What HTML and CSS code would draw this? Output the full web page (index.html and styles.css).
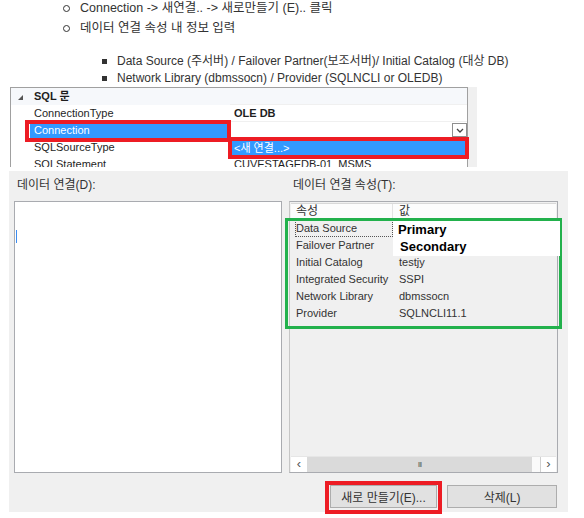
FILE: index.html
```html
<!DOCTYPE html>
<html>
<head lang="ko">
    <meta charset="UTF-8">
    <title>데이터 연결</title>
    <link rel="stylesheet" href="styles.css">
</head>
<body>
<div class="page">
    <ul class="steps">
        <li>Connection -&gt; 새연결.. -&gt; 새로만들기 (E).. 클릭</li>
        <li>데이터 연결 속성 내 정보 입력</li>
    </ul>
    <ul class="sub">
        <li>Data Source (주서버) / Failover Partner(보조서버)/ Initial Catalog (대상 DB)</li>
        <li>Network Library (dbmssocn) / Provider (SQLNCLI or OLEDB)</li>
    </ul>

    <div class="props">
        <div class="props-grid">
            <div class="prow cat">
                <span class="gut"><svg width="5" height="5" viewBox="0 0 5 5"><path d="M5 0V5H0Z" fill="#555"/></svg></span>
                <span class="pname"><b>SQL 문</b></span>
                <span class="pval"></span>
            </div>
            <div class="prow">
                <span class="gut"></span>
                <span class="pname">ConnectionType</span>
                <span class="pval"><b>OLE DB</b></span>
            </div>
            <div class="prow sel">
                <span class="gut"></span>
                <span class="pname">Connection</span>
                <span class="pval"><span class="dd-btn"><svg width="8" height="5" viewBox="0 0 8 5"><path d="M1 1L4 4L7 1" fill="none" stroke="#444" stroke-width="1.3"/></svg></span></span>
            </div>
            <div class="prow">
                <span class="gut"></span>
                <span class="pname">SQLSourceType</span>
                <span class="pval"></span>
            </div>
            <div class="prow">
                <span class="gut"></span>
                <span class="pname">SQLStatement</span>
                <span class="pval">CUVESTAGEDB-01_MSMS</span>
            </div>
        </div>
        <div class="props-side"></div>
        <div class="mark mark-conn"></div>
        <div class="dropdown">&lt;새 연결...&gt;</div>
    </div>

    <div class="dialog">
        <div class="cols">
            <div class="col">
                <div class="label left-label">데이터 연결(D):</div>
                <div class="listbox"><span class="caret"></span></div>
            </div>
            <div class="col">
                <div class="label right-label">데이터 연결 속성(T):</div>
                <div class="attrbox">
                    <div class="ahead"><span class="aname">속성</span><span class="aval">값</span></div>
                    <div class="arow focus"><span class="aname">Data Source</span><span class="aval"></span></div>
                    <div class="arow"><span class="aname">Failover Partner</span><span class="aval"></span></div>
                    <div class="arow"><span class="aname">Initial Catalog</span><span class="aval">testjy</span></div>
                    <div class="arow"><span class="aname">Integrated Security</span><span class="aval">SSPI</span></div>
                    <div class="arow"><span class="aname">Network Library</span><span class="aval">dbmssocn</span></div>
                    <div class="arow"><span class="aname">Provider</span><span class="aval">SQLNCLI11.1</span></div>
                    <div class="hscroll">
                        <span class="sb-btn">&lsaquo;</span>
                        <span class="sb-thumb">III</span>
                        <span class="sb-rest"></span>
                        <span class="sb-btn">&rsaquo;</span>
                    </div>
                    <div class="mark-green"></div>
                    <div class="values-note">
                        <div>Primary</div>
                        <div class="second">Secondary</div>
                    </div>
                </div>
            </div>
        </div>
        <div class="buttons">
            <button class="btn btn-new">새로 만들기(E)...</button>
            <button class="btn btn-del">삭제(L)</button>
        </div>
    </div>
</div>
</body>
</html>
```

FILE: styles.css
```css
*{
    box-sizing: border-box;
}
body{
    margin: 0;
    background: #fff;
    font-family: "Liberation Sans", "Noto Sans CJK KR", sans-serif;
    color: #222;
}
.page{
    width: 584px;
    height: 518px;
    overflow: hidden;
}

/* notes */
.steps{
    list-style: none;
    margin: -2px 0 0;
    padding: 0 0 0 80px;
    font-size: 12.5px;
    line-height: 20px;
    color: #333;
}
.steps li,
.sub li{
    position: relative;
}
.steps li::before{
    content: "";
    position: absolute;
    left: -17px;
    top: 7px;
    width: 5px;
    height: 5px;
    border: 1px solid #333;
    border-radius: 50%;
}
.sub{
    list-style: none;
    margin: 15px 0 0;
    padding: 0 0 0 117px;
    font-size: 12px;
    line-height: 17px;
    color: #333;
}
.sub li::before{
    content: "";
    position: absolute;
    left: -15px;
    top: 6px;
    width: 5px;
    height: 5px;
    background: #333;
}

/* property grid */
.props{
    position: relative;
    display: flex;
    width: 467px;
    height: 80px;
    margin-left: 10px;
    overflow: hidden;
}
.props-grid{
    width: 458px;
    border: 1px solid #a0a0a0;
    border-bottom: none;
    background: #fff;
}
.props-side{
    flex: 1;
    background: #f0f0f0;
}
.prow{
    display: flex;
    height: 17px;
    line-height: 17px;
    font-size: 11px;
    color: #1e1e1e;
}
.prow.cat{
    background: #f6f8fb;
}
.gut{
    width: 19px;
    display: flex;
    align-items: center;
    justify-content: center;
    padding-top: 1px;
}
.pname{
    width: 200px;
    padding-left: 4px;
    white-space: nowrap;
}
.pval{
    flex: 1;
    padding-left: 4px;
    position: relative;
    border-bottom: 1px solid #f0f0f0;
    white-space: nowrap;
}
.sel .pname{
    background: #3399ff;
    color: #fff;
}
.dd-btn{
    position: absolute;
    right: 0;
    top: 1px;
    width: 15px;
    height: 14px;
    border: 1px solid #8f8f8f;
    background: #fff;
    display: flex;
    align-items: center;
    justify-content: center;
}
.mark{
    position: absolute;
    left: 15px;
    top: 33px;
    width: 206px;
    height: 22px;
    border: 4px solid #ed1c24;
}
.dropdown{
    position: absolute;
    left: 218px;
    top: 50px;
    width: 241px;
    height: 22px;
    border: 4px solid #ed1c24;
    background: #3399ff;
    color: #fff;
    font-size: 11px;
    line-height: 14px;
    padding-left: 2px;
}

/* dialog */
.dialog{
    width: 559px;
    height: 341px;
    margin: 4px 0 0 9px;
    background: #f0f0f0;
    padding: 6px 10px 0 5px;
    font-size: 12px;
    color: #333;
}
.cols{
    display: grid;
    grid-template-columns: 268px 269px;
    column-gap: 7px;
}
.label{
    height: 16px;
    line-height: 16px;
    margin-bottom: 8px;
}
.left-label{
    padding-left: 3px;
}
.right-label{
    padding-left: 4px;
}
.listbox{
    height: 272px;
    border: 1px solid #a9abb0;
    background: #fff;
    position: relative;
}
.caret{
    position: absolute;
    left: 1px;
    top: 28px;
    width: 1px;
    height: 13px;
    background: #3c8cf0;
}
.attrbox{
    position: relative;
    height: 272px;
    border: 1px solid #a9abb0;
    border-left-color: #c6c6c6;
    background: #f0f0f0;
    padding: 1px 1px 0 1px;
    display: flex;
    flex-direction: column;
    font-size: 11px;
}
.ahead{
    display: flex;
    height: 17px;
    line-height: 15px;
    background: #fcfcfc;
    border-bottom: 1px solid #e3e3e3;
    border-top: 1px solid #d8d8d8;
    font-size: 12px;
}
.ahead .aname{
    border-right: 1px solid #e3e3e3;
}
.arow{
    display: flex;
    height: 17px;
    line-height: 16px;
    color: #333;
}
.aname{
    width: 98px;
    margin-left: 4px;
    padding-left: 1px;
    white-space: nowrap;
}
.aval{
    flex: 1;
    padding-left: 6px;
}
.arow.focus .aname{
    outline: 1px dotted #555;
    outline-offset: -1px;
}
.hscroll{
    margin-top: auto;
    height: 16px;
    display: flex;
    background: #fafafa;
    border-top: 1px solid #e6e6e6;
}
.sb-btn{
    width: 16px;
    background: #fff;
    color: #555;
    text-align: center;
    line-height: 14px;
    font-size: 13px;
}
.sb-btn:last-child{
    border-left: 1px solid #d0d0d0;
}
.sb-thumb{
    width: 225px;
    background: #dadada;
    color: #666;
    text-align: center;
    font-size: 8px;
    line-height: 15px;
    letter-spacing: -1px;
}
.sb-rest{
    flex: 1;
}
.mark-green{
    position: absolute;
    left: -5px;
    top: 16px;
    width: 277px;
    height: 111px;
    border: 3px solid #22b14c;
}
.values-note{
    position: absolute;
    left: 103px;
    top: 19px;
    width: 167px;
    height: 35px;
    background: #fff;
    color: #000;
    font-weight: bold;
    font-size: 13px;
    line-height: 17px;
    padding: 0 0 0 5px;
}
.values-note .second{
    padding-left: 2px;
}

/* buttons */
.buttons{
    display: flex;
    justify-content: flex-end;
    gap: 10px;
    margin-top: 12px;
    padding-right: 1px;
}
.btn{
    height: 23px;
    border: 1px solid #adadad;
    background: #e1e1e1;
    font-family: "Liberation Sans", "Noto Sans CJK KR", sans-serif;
    font-size: 12px;
    color: #333;
    padding: 0;
}
.btn-new{
    width: 107px;
    position: relative;
}
.btn-new::after{
    content: "";
    position: absolute;
    left: -6px;
    top: -5px;
    right: -6px;
    bottom: -7px;
    border: 4px solid #ed1c24;
}
.btn-del{
    width: 110px;
}
```
